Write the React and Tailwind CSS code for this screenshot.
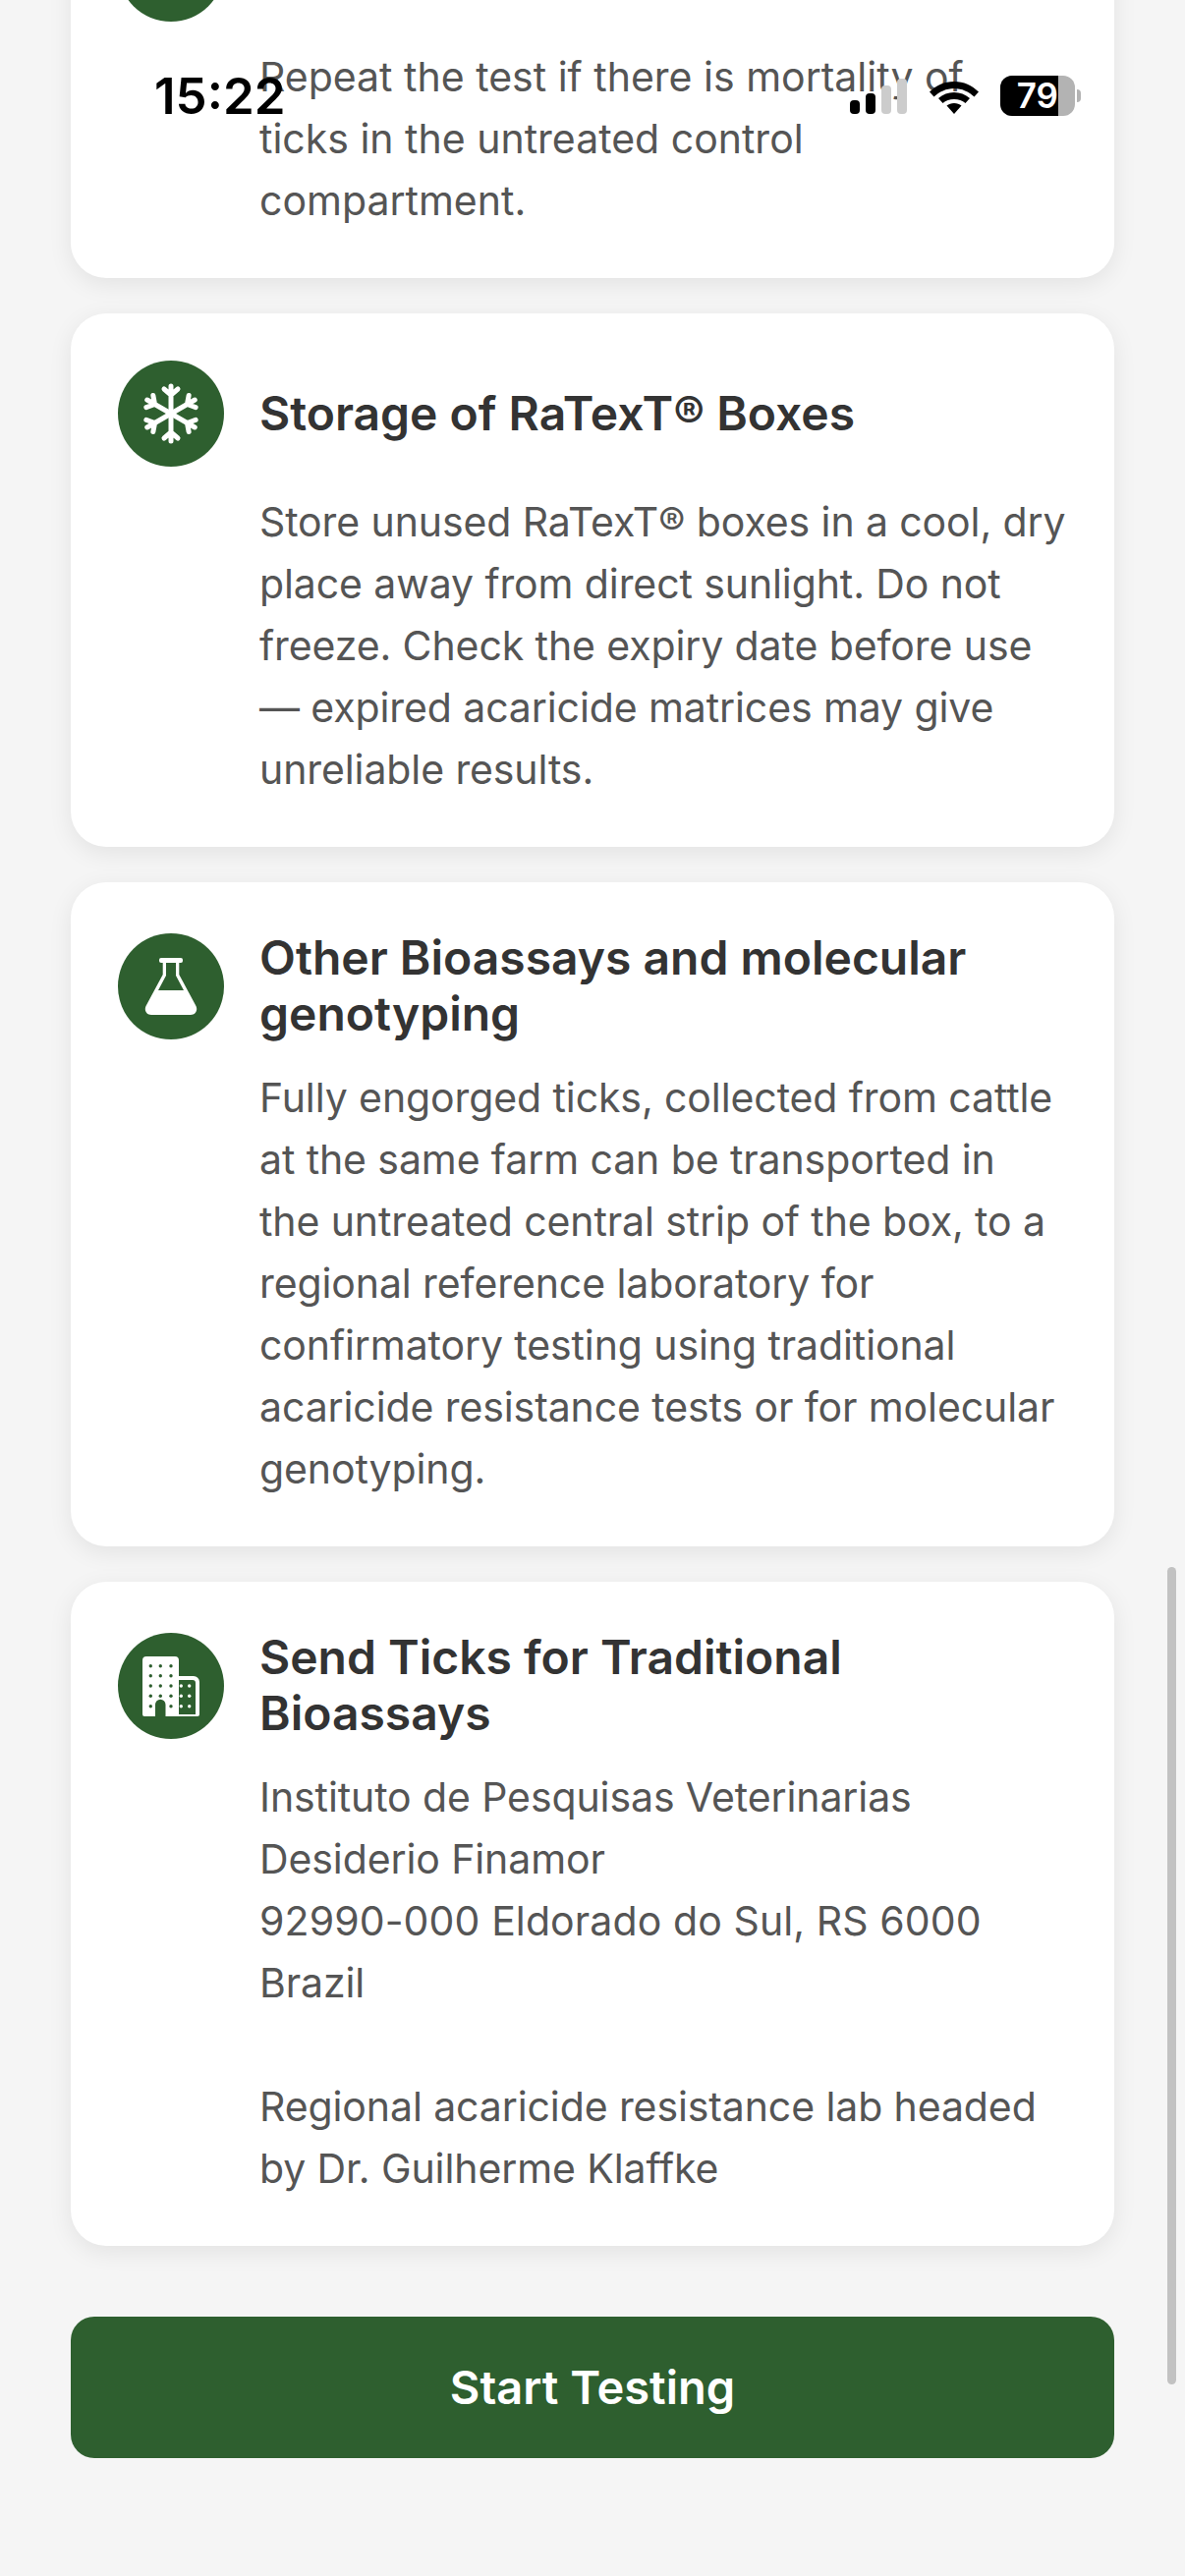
import React from "react";

function Snow() {
  const arms = [0, 60, 120, 180, 240, 300];
  return (
    <svg width="60" height="62" viewBox="-30 -31 60 62" fill="none" stroke="white" strokeWidth="5" strokeLinecap="round" strokeLinejoin="round">
      {arms.map((a) => (
        <g key={a} transform={"rotate(" + a + ")"}>
          <path d="M0 0V-28M-7 -25 0 -19 7 -25" />
        </g>
      ))}
    </svg>
  );
}

function Flask() {
  return (
    <svg width="60" height="60" viewBox="0 0 60 60" fill="white">
      <rect x="18" y="1" width="24" height="5" rx="2" />
      <path
        fillRule="evenodd"
        d="M21.700 5H38.300V18L55.500 50C57.500 54.500 55 59 50 59H10C5 59 2.500 54.500 4.500 50L21.700 18ZM25 5V19L17 34H43L35 19V5Z"
      />
    </svg>
  );
}

function Building() {
  const big = [];
  const xs = [8.3, 18.3, 29];
  const ys = [10.7, 20.7, 31, 41.3, 51.7];
  ys.forEach((y, r) =>
    xs.forEach((x, c) => {
      if (r === 4 && c === 1) return;
      big.push(<circle key={r + "-" + c} cx={x} cy={y} r="1.700" fill="#2e5f2f" />);
    })
  );
  const small = [];
  [31, 41.3, 51.7].forEach((y, r) =>
    [39.3, 47.7].forEach((x, c) => {
      small.push(<circle key={r + "-" + c} cx={x} cy={y} r="1.700" fill="white" />);
    })
  );
  return (
    <svg width="58" height="62" viewBox="0 0 58 62" fill="white">
      <path d="M0 5a4 4 0 0 1 4-4h29a4 4 0 0 1 4 4v57H23.500V50a5 5 0 0 0-10.500 0v12H2a2 2 0 0 1-2-2z" />
      <path fillRule="evenodd" d="M36 21h16a6 6 0 0 1 6 6v33a2 2 0 0 1-2 2H36zM36.700 25V60H54V28a3 3 0 0 0-3-3z" />
      {big}
      {small}
    </svg>
  );
}

function Card({ icon, iconClass, className, children }) {
  return (
    <div className={"bg-white rounded-[36px] p-12 flex gap-9 shadow-[0_6px_24px_rgba(0,0,0,0.08)] " + (className || "")}>
      <div className={"w-[108px] h-[108px] rounded-full bg-[#2e5f2f] flex items-center justify-center shrink-0 " + (iconClass || "")}>{icon}</div>
      <div className="flex-1 min-w-0">{children}</div>
    </div>
  );
}

const titleCls = "text-[48px] leading-[57px] font-semibold text-[#333333]";
const bodyCls = "text-[41px] leading-[63px] text-[#555555]";

export default function App() {
  return (
    <div className="relative w-[1206px] h-[2622px] overflow-hidden bg-[#f5f5f5] font-['Inter',sans-serif]">
      <div className="flex flex-col px-[72px] gap-9 -mt-[134px]">
        <Card icon={<span />} className="h-[417px]">
          <p className={bodyCls + " mt-[133px]"}>Repeat the test if there is mortality of<br />ticks in the untreated control<br />compartment.</p>
        </Card>
        <Card icon={<Snow />} className="h-[543px]">
          <h2 className={titleCls + " mt-[25px]"}>Storage of RaTexT® Boxes</h2>
          <p className={bodyCls + " mt-[51px] tracking-[-0.1px]"}>Store unused RaTexT® boxes in a cool, dry place away from direct sunlight. Do not freeze. Check the expiry date before use — expired acaricide matrices may give unreliable results.</p>
        </Card>
        <Card icon={<Flask />} iconClass="mt-1" className="h-[676px]">
          <h2 className={titleCls}>Other Bioassays and molecular genotyping</h2>
          <p className={bodyCls + " mt-[26px] tracking-[-0.1px]"}>Fully engorged ticks, collected from cattle at the same farm can be transported in<br />the untreated central strip of the box, to a regional reference laboratory for confirmatory testing using traditional acaricide resistance tests or for molecular genotyping.</p>
        </Card>
        <Card icon={<Building />} iconClass="mt-1" className="h-[676px]">
          <h2 className={titleCls}>Send Ticks for Traditional Bioassays</h2>
          <p className={bodyCls + " mt-[26px] tracking-[-0.1px]"}>Instituto de Pesquisas Veterinarias<br />Desiderio Finamor<br /><span className="tracking-[0.1px]">92990-000 Eldorado do Sul, RS 6000</span><br />Brazil<br /><br />Regional acaricide resistance lab headed by Dr. Guilherme Klaffke</p>
        </Card>
        <button className="mt-9 h-[144px] rounded-[24px] bg-[#2e5f2f] text-white text-[47px] font-semibold">Start Testing</button>
      </div>

      <div className="absolute left-[157px] top-[70px] text-[51px] leading-[56px] font-semibold text-black">15:22</div>
      <div className="absolute left-[865px] top-[76px] h-[40px] flex items-end gap-[6px]">
        <span className="w-[10px] h-[14px] rounded-[4px] bg-black" />
        <span className="w-[10px] h-[21px] rounded-[4px] bg-black" />
        <span className="w-[10px] h-[29px] rounded-[4px] bg-[#cccccc]" />
        <span className="w-[10px] h-[36px] rounded-[4px] bg-[#cccccc]" />
      </div>
      <div className="absolute left-[946px] top-[83px]">
        <svg width="50" height="33" viewBox="0 0 50 33" fill="black">
          <path d="M25 0C35 0 43 4 50 10.500L45.500 15.500C40 10.500 33 7 25 7S10 10.500 4.500 15.500L0 10.500C7 4 15 0 25 0Z" />
          <path d="M25 11C31 11 36.500 13 41 17L36.500 22C33.500 19.500 29.500 18 25 18S16.500 19.500 13.500 22L9 17C13.500 13 19 11 25 11Z" />
          <path d="M25 22C28 22 30.500 23 32.500 24.500L25 33 17.500 24.500C19.500 23 22 22 25 22Z" />
        </svg>
      </div>
      <div className="absolute left-[1018px] top-[77px] w-[76px] h-[41px] rounded-[12px] bg-[#b3b3b3] overflow-hidden">
        <div className="h-full w-[59px] bg-black flex items-center justify-end text-white text-[35px] leading-none font-semibold">79</div>
      </div>
      <div className="absolute left-[1096px] top-[91px] w-[4px] h-[13px] rounded-r-full bg-[#b3b3b3]" />
      <div className="absolute left-[1188px] top-[1595px] w-[9px] h-[832px] rounded-full bg-[#c2c2c2]" />
    </div>
  );
}
